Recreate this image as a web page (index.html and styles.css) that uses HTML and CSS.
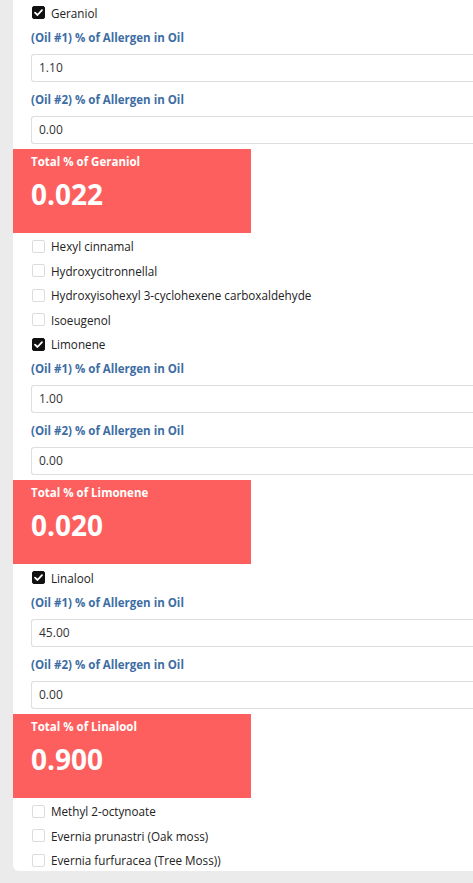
FILE: index.html
```html
<!DOCTYPE html>
<html lang="en">
<head>
<meta charset="utf-8">
<title>Allergens</title>
<link rel="stylesheet" href="styles.css">
</head>
<body>
<div class="page">
  <div class="card">
    <label class="check-row"><span class="box checked"><svg viewBox="0 0 13 13" width="13" height="13"><path d="M3 6.6 L5.5 9 L10 4.2" fill="none" stroke="#fff" stroke-width="1.8" stroke-linecap="round" stroke-linejoin="round"/></svg></span><span class="check-label">Geraniol</span></label>
    <div class="field first"><div class="field-label">(Oil #1) % of Allergen in Oil</div><div class="input">1.10</div></div>
    <div class="field"><div class="field-label">(Oil #2) % of Allergen in Oil</div><div class="input">0.00</div></div>
    <div class="total"><div class="total-title">Total % of Geraniol</div><div class="total-value">0.022</div></div>

    <div class="after-total">
      <label class="check-row"><span class="box"></span><span class="check-label">Hexyl cinnamal</span></label>
      <label class="check-row"><span class="box"></span><span class="check-label">Hydroxycitronnellal</span></label>
      <label class="check-row"><span class="box"></span><span class="check-label">Hydroxyisohexyl 3-cyclohexene carboxaldehyde</span></label>
      <label class="check-row"><span class="box"></span><span class="check-label">Isoeugenol</span></label>
      <label class="check-row"><span class="box checked"><svg viewBox="0 0 13 13" width="13" height="13"><path d="M3 6.6 L5.5 9 L10 4.2" fill="none" stroke="#fff" stroke-width="1.8" stroke-linecap="round" stroke-linejoin="round"/></svg></span><span class="check-label">Limonene</span></label>
    </div>
    <div class="field first"><div class="field-label">(Oil #1) % of Allergen in Oil</div><div class="input">1.00</div></div>
    <div class="field"><div class="field-label">(Oil #2) % of Allergen in Oil</div><div class="input">0.00</div></div>
    <div class="total"><div class="total-title">Total % of Limonene</div><div class="total-value">0.020</div></div>

    <div class="after-total">
      <label class="check-row"><span class="box checked"><svg viewBox="0 0 13 13" width="13" height="13"><path d="M3 6.6 L5.5 9 L10 4.2" fill="none" stroke="#fff" stroke-width="1.8" stroke-linecap="round" stroke-linejoin="round"/></svg></span><span class="check-label">Linalool</span></label>
    </div>
    <div class="field first"><div class="field-label">(Oil #1) % of Allergen in Oil</div><div class="input">45.00</div></div>
    <div class="field"><div class="field-label">(Oil #2) % of Allergen in Oil</div><div class="input">0.00</div></div>
    <div class="total"><div class="total-title">Total % of Linalool</div><div class="total-value">0.900</div></div>

    <div class="after-total">
      <label class="check-row"><span class="box"></span><span class="check-label">Methyl 2-octynoate</span></label>
      <label class="check-row"><span class="box"></span><span class="check-label">Evernia prunastri (Oak moss)</span></label>
      <label class="check-row"><span class="box"></span><span class="check-label">Evernia furfuracea (Tree Moss))</span></label>
    </div>
  </div>
</div>
</body>
</html>
```
FILE: styles.css
```css
html, body {
  margin: 0;
  padding: 0;
  background: #ebebeb;
  overflow: hidden;
  height: 883px;
}
.page {
  width: 473px;
  overflow: hidden;
  padding-left: 13px;
  box-sizing: border-box;
  font-family: "Open Sans", "Noto Sans", sans-serif;
}
.card {
  width: calc(100% + 8px);
  background: #fff;
  border-radius: 0 0 6px 6px;
  padding: 0 0 0 18px;
  height: 871px;
  box-sizing: border-box;
}
.check-row {
  display: flex;
  align-items: center;
  height: 24.5px;
  padding-left: 1px;
  padding-top: 1px;
  box-sizing: border-box;
}
.box {
  width: 13px;
  height: 13px;
  box-sizing: border-box;
  border: 1px solid #dcdcdc;
  border-radius: 2px;
  background: #fff;
  display: flex;
  align-items: center;
  justify-content: center;
  margin-right: 6px;
}
.box.checked {
  background: #111;
  border-color: #111;
}
.box svg { display: block; flex: none; }
.check-label {
  font-size: 11.7px;
  color: #222;
  line-height: 16px;
}
.field-label {
  font-size: 11.5px;
  font-weight: 700;
  color: #3d6da3;
  line-height: 16px;
  margin-top: 10px;
}
.field.first .field-label { margin-top: 5px; }
.input {
  margin-top: 8px;
  height: 28px;
  box-sizing: border-box;
  border: 1px solid #dedede;
  border-right: none;
  border-radius: 3px 0 0 3px;
  padding-left: 7px;
  font-size: 12px;
  color: #333;
  line-height: 26px;
}
.total {
  margin: 5px 0 0 -18px;
  width: 238px;
  height: 84px;
  box-sizing: border-box;
  background: #fd5f5e;
  padding: 5px 0 0 18px;
  color: #fff;
}
.total-title {
  font-size: 11.5px;
  font-weight: 700;
  line-height: 16px;
}
.total-value {
  font-size: 28px;
  font-weight: 700;
  line-height: 36px;
  margin-top: 6px;
}
.after-total { margin-top: 1px; }
```
